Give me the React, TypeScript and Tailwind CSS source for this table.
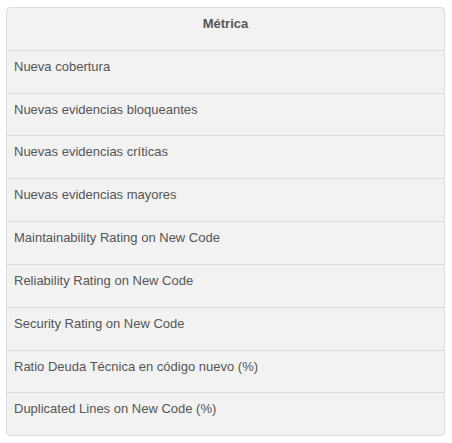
const rows = [
  "Nueva cobertura",
  "Nuevas evidencias bloqueantes",
  "Nuevas evidencias críticas",
  "Nuevas evidencias mayores",
  "Maintainability Rating on New Code",
  "Reliability Rating on New Code",
  "Security Rating on New Code",
  "Ratio Deuda Técnica en código nuevo (%)",
  "Duplicated Lines on New Code (%)",
];

export default function App() {
  return (
    <div className="w-[452px] h-[443px] bg-white pt-[7px] pl-[6px] font-['Liberation_Sans',Arial,sans-serif] text-[13px] text-[#555]">
      <div className="w-[439px] rounded-[4px] border border-[#dcdcdc] bg-[#f2f2f2] overflow-hidden">
        <div className="h-[42px] px-2 pt-[7px] text-center font-bold leading-[17px]">Métrica</div>
        {rows.map((r, i) => (
          <div
            key={r}
            className={`${i === 1 || i === 7 ? "h-[42px]" : "h-[43px]"} border-t border-[#dcdcdc] pl-[7px] pr-2 pt-[7px] leading-[17px]`}
          >
            {r}
          </div>
        ))}
      </div>
    </div>
  );
}
